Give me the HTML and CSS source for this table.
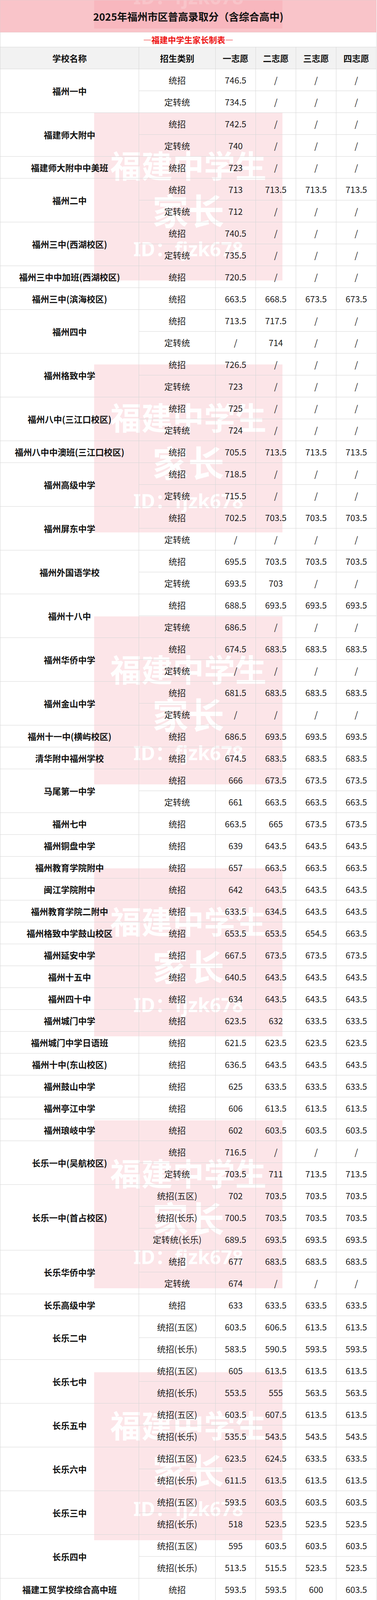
FILE: index.html
```html
<!DOCTYPE html>
<html lang="zh-CN">
<head>
<meta charset="utf-8">
<title>2025年福州市区普高录取分</title>
<link rel="stylesheet" href="styles.css">
</head>
<body>
<div class="page">
  <div class="wm-layer">
    <div class="wm wm-top"><div class="wm-l3 wm-cut">ID：fjzk678</div></div>
    <div class="wm"><div class="wm-l1">福建中学生</div><div class="wm-l2">家长</div><div class="wm-l3">ID：fjzk678</div></div>
    <div class="wm"><div class="wm-l1">福建中学生</div><div class="wm-l2">家长</div><div class="wm-l3">ID：fjzk678</div></div>
    <div class="wm"><div class="wm-l1">福建中学生</div><div class="wm-l2">家长</div><div class="wm-l3">ID：fjzk678</div></div>
    <div class="wm"><div class="wm-l1">福建中学生</div><div class="wm-l2">家长</div><div class="wm-l3">ID：fjzk678</div></div>
    <div class="wm"><div class="wm-l1">福建中学生</div><div class="wm-l2">家长</div><div class="wm-l3">ID：fjzk678</div></div>
    <div class="wm"><div class="wm-l1">福建中学生</div><div class="wm-l2">家长</div><div class="wm-l3">ID：fjzk678</div></div>
    <div class="wm"><div class="wm-l1">福建中学生</div><div class="wm-l2">家长</div><div class="wm-l3">ID：fjzk678</div></div>
    <div class="wm wm-bottom"></div>
  </div>
  <table class="score">
    <colgroup>
      <col class="c-name"><col class="c-type"><col class="c-val"><col class="c-val"><col class="c-val"><col class="c-val">
    </colgroup>
    <thead>
      <tr class="title-row"><th colspan="6">2025年福州市区普高录取分（含综合高中)</th></tr>
      <tr class="sub-row"><th colspan="6">—福建中学生家长制表—</th></tr>
      <tr class="head-row"><th>学校名称</th><th>招生类别</th><th>一志愿</th><th>二志愿</th><th>三志愿</th><th>四志愿</th></tr>
    </thead>
    <tbody>
      <tr><td class="name" rowspan="2">福州一中</td><td>统招</td><td>746.5</td><td>/</td><td>/</td><td>/</td></tr>
      <tr><td>定转统</td><td>734.5</td><td>/</td><td>/</td><td>/</td></tr>
      <tr><td class="name" rowspan="2">福建师大附中</td><td>统招</td><td>742.5</td><td>/</td><td>/</td><td>/</td></tr>
      <tr><td>定转统</td><td>740</td><td>/</td><td>/</td><td>/</td></tr>
      <tr><td class="name">福建师大附中中美班</td><td>统招</td><td>723</td><td>/</td><td>/</td><td>/</td></tr>
      <tr><td class="name" rowspan="2">福州二中</td><td>统招</td><td>713</td><td>713.5</td><td>713.5</td><td>713.5</td></tr>
      <tr><td>定转统</td><td>712</td><td>/</td><td>/</td><td>/</td></tr>
      <tr><td class="name" rowspan="2">福州三中(西湖校区)</td><td>统招</td><td>740.5</td><td>/</td><td>/</td><td>/</td></tr>
      <tr><td>定转统</td><td>735.5</td><td>/</td><td>/</td><td>/</td></tr>
      <tr><td class="name">福州三中中加班(西湖校区)</td><td>统招</td><td>720.5</td><td>/</td><td>/</td><td>/</td></tr>
      <tr><td class="name">福州三中(滨海校区)</td><td>统招</td><td>663.5</td><td>668.5</td><td>673.5</td><td>673.5</td></tr>
      <tr><td class="name" rowspan="2">福州四中</td><td>统招</td><td>713.5</td><td>717.5</td><td>/</td><td>/</td></tr>
      <tr><td>定转统</td><td>/</td><td>714</td><td>/</td><td>/</td></tr>
      <tr><td class="name" rowspan="2">福州格致中学</td><td>统招</td><td>726.5</td><td>/</td><td>/</td><td>/</td></tr>
      <tr><td>定转统</td><td>723</td><td>/</td><td>/</td><td>/</td></tr>
      <tr><td class="name" rowspan="2">福州八中(三江口校区)</td><td>统招</td><td>725</td><td>/</td><td>/</td><td>/</td></tr>
      <tr><td>定转统</td><td>724</td><td>/</td><td>/</td><td>/</td></tr>
      <tr><td class="name">福州八中中澳班(三江口校区)</td><td>统招</td><td>705.5</td><td>713.5</td><td>713.5</td><td>713.5</td></tr>
      <tr><td class="name" rowspan="2">福州高级中学</td><td>统招</td><td>718.5</td><td>/</td><td>/</td><td>/</td></tr>
      <tr><td>定转统</td><td>715.5</td><td>/</td><td>/</td><td>/</td></tr>
      <tr><td class="name" rowspan="2">福州屏东中学</td><td>统招</td><td>702.5</td><td>703.5</td><td>703.5</td><td>703.5</td></tr>
      <tr><td>定转统</td><td>/</td><td>/</td><td>/</td><td>/</td></tr>
      <tr><td class="name" rowspan="2">福州外国语学校</td><td>统招</td><td>695.5</td><td>703.5</td><td>703.5</td><td>703.5</td></tr>
      <tr><td>定转统</td><td>693.5</td><td>703</td><td>/</td><td>/</td></tr>
      <tr><td class="name" rowspan="2">福州十八中</td><td>统招</td><td>688.5</td><td>693.5</td><td>693.5</td><td>693.5</td></tr>
      <tr><td>定转统</td><td>686.5</td><td>/</td><td>/</td><td>/</td></tr>
      <tr><td class="name" rowspan="2">福州华侨中学</td><td>统招</td><td>674.5</td><td>683.5</td><td>683.5</td><td>683.5</td></tr>
      <tr><td>定转统</td><td>/</td><td>/</td><td>/</td><td>/</td></tr>
      <tr><td class="name" rowspan="2">福州金山中学</td><td>统招</td><td>681.5</td><td>683.5</td><td>683.5</td><td>683.5</td></tr>
      <tr><td>定转统</td><td>/</td><td>/</td><td>/</td><td>/</td></tr>
      <tr><td class="name">福州十一中(横屿校区)</td><td>统招</td><td>686.5</td><td>693.5</td><td>693.5</td><td>693.5</td></tr>
      <tr><td class="name">清华附中福州学校</td><td>统招</td><td>674.5</td><td>683.5</td><td>683.5</td><td>683.5</td></tr>
      <tr><td class="name" rowspan="2">马尾第一中学</td><td>统招</td><td>666</td><td>673.5</td><td>673.5</td><td>673.5</td></tr>
      <tr><td>定转统</td><td>661</td><td>663.5</td><td>663.5</td><td>663.5</td></tr>
      <tr><td class="name">福州七中</td><td>统招</td><td>663.5</td><td>665</td><td>673.5</td><td>673.5</td></tr>
      <tr><td class="name">福州铜盘中学</td><td>统招</td><td>639</td><td>643.5</td><td>643.5</td><td>643.5</td></tr>
      <tr><td class="name">福州教育学院附中</td><td>统招</td><td>657</td><td>663.5</td><td>663.5</td><td>663.5</td></tr>
      <tr><td class="name">闽江学院附中</td><td>统招</td><td>642</td><td>643.5</td><td>643.5</td><td>643.5</td></tr>
      <tr><td class="name">福州教育学院二附中</td><td>统招</td><td>633.5</td><td>634.5</td><td>643.5</td><td>643.5</td></tr>
      <tr><td class="name">福州格致中学鼓山校区</td><td>统招</td><td>653.5</td><td>653.5</td><td>654.5</td><td>663.5</td></tr>
      <tr><td class="name">福州延安中学</td><td>统招</td><td>667.5</td><td>673.5</td><td>673.5</td><td>673.5</td></tr>
      <tr><td class="name">福州十五中</td><td>统招</td><td>640.5</td><td>643.5</td><td>643.5</td><td>643.5</td></tr>
      <tr><td class="name">福州四十中</td><td>统招</td><td>634</td><td>643.5</td><td>643.5</td><td>643.5</td></tr>
      <tr><td class="name">福州城门中学</td><td>统招</td><td>623.5</td><td>632</td><td>633.5</td><td>633.5</td></tr>
      <tr><td class="name">福州城门中学日语班</td><td>统招</td><td>621.5</td><td>623.5</td><td>623.5</td><td>623.5</td></tr>
      <tr><td class="name">福州十中(东山校区)</td><td>统招</td><td>636.5</td><td>643.5</td><td>643.5</td><td>643.5</td></tr>
      <tr><td class="name">福州鼓山中学</td><td>统招</td><td>625</td><td>633.5</td><td>633.5</td><td>633.5</td></tr>
      <tr><td class="name">福州亭江中学</td><td>统招</td><td>606</td><td>613.5</td><td>613.5</td><td>613.5</td></tr>
      <tr><td class="name">福州琅岐中学</td><td>统招</td><td>602</td><td>603.5</td><td>603.5</td><td>603.5</td></tr>
      <tr><td class="name" rowspan="2">长乐一中(吴航校区)</td><td>统招</td><td>716.5</td><td>/</td><td>/</td><td>/</td></tr>
      <tr><td>定转统</td><td>703.5</td><td>711</td><td>713.5</td><td>713.5</td></tr>
      <tr><td class="name" rowspan="3">长乐一中(首占校区)</td><td>统招(五区)</td><td>702</td><td>703.5</td><td>703.5</td><td>703.5</td></tr>
      <tr><td>统招(长乐)</td><td>700.5</td><td>703.5</td><td>703.5</td><td>703.5</td></tr>
      <tr><td>定转统(长乐)</td><td>689.5</td><td>693.5</td><td>693.5</td><td>693.5</td></tr>
      <tr><td class="name" rowspan="2">长乐华侨中学</td><td>统招</td><td>677</td><td>683.5</td><td>683.5</td><td>683.5</td></tr>
      <tr><td>定转统</td><td>674</td><td>/</td><td>/</td><td>/</td></tr>
      <tr><td class="name">长乐高级中学</td><td>统招</td><td>633</td><td>633.5</td><td>633.5</td><td>633.5</td></tr>
      <tr><td class="name" rowspan="2">长乐二中</td><td>统招(五区)</td><td>603.5</td><td>606.5</td><td>613.5</td><td>613.5</td></tr>
      <tr><td>统招(长乐)</td><td>583.5</td><td>590.5</td><td>593.5</td><td>593.5</td></tr>
      <tr><td class="name" rowspan="2">长乐七中</td><td>统招(五区)</td><td>605</td><td>613.5</td><td>613.5</td><td>613.5</td></tr>
      <tr><td>统招(长乐)</td><td>553.5</td><td>555</td><td>563.5</td><td>563.5</td></tr>
      <tr><td class="name" rowspan="2">长乐五中</td><td>统招(五区)</td><td>603.5</td><td>607.5</td><td>613.5</td><td>613.5</td></tr>
      <tr><td>统招(长乐)</td><td>535.5</td><td>543.5</td><td>543.5</td><td>543.5</td></tr>
      <tr><td class="name" rowspan="2">长乐六中</td><td>统招(五区)</td><td>623.5</td><td>624.5</td><td>633.5</td><td>633.5</td></tr>
      <tr><td>统招(长乐)</td><td>611.5</td><td>613.5</td><td>613.5</td><td>613.5</td></tr>
      <tr><td class="name" rowspan="2">长乐三中</td><td>统招(五区)</td><td>593.5</td><td>603.5</td><td>603.5</td><td>603.5</td></tr>
      <tr><td>统招(长乐)</td><td>518</td><td>523.5</td><td>523.5</td><td>523.5</td></tr>
      <tr><td class="name" rowspan="2">长乐四中</td><td>统招(五区)</td><td>595</td><td>603.5</td><td>603.5</td><td>603.5</td></tr>
      <tr><td>统招(长乐)</td><td>513.5</td><td>515.5</td><td>523.5</td><td>523.5</td></tr>
      <tr><td class="name">福建工贸学校综合高中班</td><td>统招</td><td>593.5</td><td>593.5</td><td>600</td><td>603.5</td></tr>
      <tr><td class="name">福建经济学校综合高中班</td><td>统招</td><td>583.5</td><td>588</td><td>593.5</td><td>593.5</td></tr>
      <tr class="tall"><td class="name two">福州财政金融职业中专学校<br>综合高中班</td><td>统招</td><td>593.5</td><td>595.5</td><td>603.5</td><td>603.5</td></tr>
      <tr class="tall"><td class="name two">福州商贸职业中专学校<br>综合高中班</td><td>统招</td><td>583.5</td><td>588.5</td><td>593.5</td><td>593.5</td></tr>
      <tr class="tall"><td class="name two">福州机电工程职业技术学校<br>综合高中班</td><td>统招</td><td>583.5</td><td>583.5</td><td>587.5</td><td>593.5</td></tr>
      <tr><td class="name">长乐职业中专学校</td><td>统招(五区)</td><td>580</td><td>583.5</td><td>583.5</td><td>583.5</td></tr>
      <tr><td class="name">综合高中班</td><td>统招(长乐)</td><td>494.5</td><td>503.5</td><td>503.5</td><td>503.5</td></tr>
      <tr><td class="name">福州文博中学(民办)</td><td>统招</td><td>616</td><td>623.5</td><td>623.5</td><td>623.5</td></tr>
      <tr><td class="name">福州黎明中学(民办)</td><td>统招</td><td>563.5</td><td>570</td><td>573.5</td><td>573.5</td></tr>
      <tr><td class="name">福州日升中学(民办)</td><td>统招</td><td>593.5</td><td>593.5</td><td>602.5</td><td>603.5</td></tr>
      <tr><td class="name">福州阳光实验学校(民办)</td><td>统招</td><td>560.5</td><td>563.5</td><td>563.5</td><td>563.5</td></tr>
      <tr class="tall last"><td class="name two">福州阳光实验学校<br>双语班(民办)</td><td>统招</td><td>483.5</td><td>483.5</td><td>488.5</td><td>493.5</td></tr>
    </tbody>
  </table>
</div>
</body>
</html>
```

FILE: styles.css
```css
html, body {
  margin: 0;
  padding: 0;
  background: #ffffff;
}

body {
  font-family: "Noto Sans CJK SC", "Noto Sans", sans-serif;
  color: #1a1a1a;
}

.page {
  position: relative;
  width: 965px;
  height: 4876px;
  overflow: hidden;
}

/* watermark layer (lies under the table text) */
.wm-layer {
  position: absolute;
  left: 0;
  top: 0;
  width: 100%;
  height: 100%;
  z-index: 0;
  overflow: hidden;
  pointer-events: none;
}

.wm {
  position: absolute;
  left: 241px;
  width: 482px;
  height: 430px;
  background: rgba(235, 100, 120, 0.17);
  color: rgba(255, 255, 255, 0.96);
  text-align: center;
  font-weight: 700;
  font-family: "Noto Sans CJK SC", sans-serif;
  white-space: nowrap;
  overflow: hidden;
}

.wm:nth-child(1) { top: 0; height: 73px; }
.wm:nth-child(2) { top: 288px; }
.wm:nth-child(3) { top: 933px; }
.wm:nth-child(4) { top: 1578px; }
.wm:nth-child(5) { top: 2223px; }
.wm:nth-child(6) { top: 2868px; }
.wm:nth-child(7) { top: 3513px; }
.wm:nth-child(8) { top: 4158px; }
.wm:nth-child(9) { top: 4803px; height: 73px; }

.wm-l1 {
  margin-top: 77px;
  height: 110px;
  line-height: 110px;
  font-size: 80px;
}

.wm-l2 {
  height: 122px;
  line-height: 122px;
  font-size: 92px;
}

.wm-l3 {
  height: 80px;
  line-height: 80px;
  font-size: 50px;
  font-family: "Noto Sans", "Noto Sans CJK SC", sans-serif;
}

.wm-cut {
  margin-top: -48px;
}

/* table */
.score {
  position: relative;
  z-index: 1;
  width: 964px;
  border-collapse: collapse;
  table-layout: fixed;
}

.c-name { width: 355px; }
.c-type { width: 196px; }
.c-val { width: 103px; }

.score th,
.score td {
  border: 1px solid #d8d8d8;
  padding: 0;
  text-align: center;
  vertical-align: middle;
  font-size: 22px;
  line-height: 1.2;
}

.score td {
  font-weight: 400;
  color: #1c1c1c;
}

.title-row { height: 82px; }
.title-row th {
  background: rgba(243, 137, 147, 0.5);
  font-size: 26px;
  font-weight: 700;
  color: #111111;
  border-color: #e9c9cc;
}

.sub-row { height: 38px; }
.sub-row th {
  background: transparent;
  color: #ee1111;
  font-size: 21px;
  font-weight: 700;
  font-family: "Noto Sans CJK SC", sans-serif;
}

.head-row { height: 56px; }
.head-row th {
  background: #f2f2f2;
  font-weight: 700;
  color: #111111;
}

tbody tr { height: 56px; }
tbody tr.tall { height: 97px; }
tbody tr.tall.last { height: 94px; }

.score td.name {
  font-weight: 700;
  color: #111111;
}

.score td.two {
  line-height: 33px;
}
```
